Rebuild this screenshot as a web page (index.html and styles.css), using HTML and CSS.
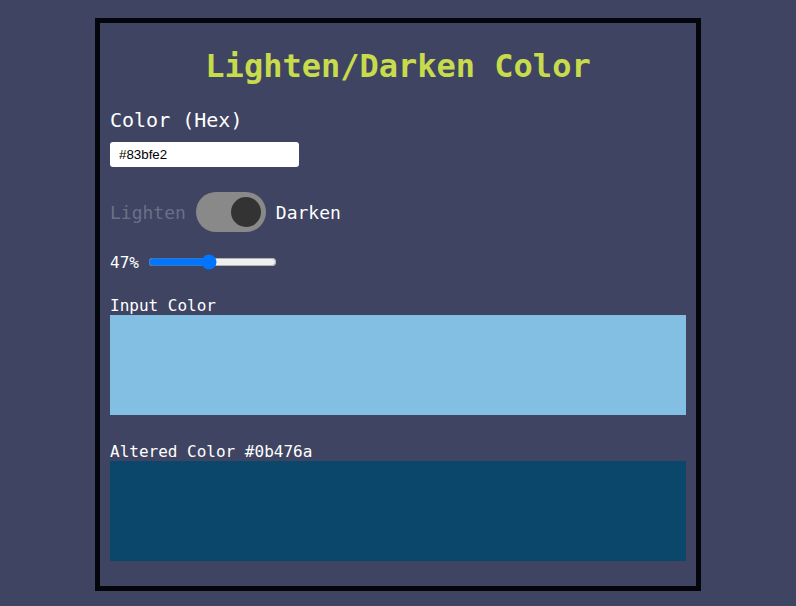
FILE: index.html
```html
<!DOCTYPE html>
<html>
<head>
<meta charset="utf-8">
<link rel="stylesheet" href="styles.css">
</head>
<body>
<div class="box">
  <h1 class="title">Lighten/Darken Color</h1>
  <label class="hex-label" for="hex">Color (Hex)</label>
  <input class="hex-input" id="hex" type="text" value="#83bfe2">
  <div class="toggle-row">
    <span class="mode off">Lighten</span>
    <span class="toggle"><span class="knob"></span></span>
    <span class="mode on">Darken</span>
  </div>
  <div class="slider-row">
    <span class="pct">47%</span>
    <input class="range" type="range" min="0" max="100" value="47">
  </div>
  <div class="swatch-label first">Input Color</div>
  <div class="swatch" style="background:#83bfe2"></div>
  <div class="swatch-label">Altered Color #0b476a</div>
  <div class="swatch" style="background:#0b476a"></div>
</div>
</body>
</html>
```
FILE: styles.css
```css
html, body {
  margin: 0;
  padding: 0;
  background: #3e4462;
}
body {
  font-family: "DejaVu Sans Mono", "Liberation Mono", monospace;
  color: #ffffff;
}
.box {
  box-sizing: border-box;
  width: 606px;
  margin: 18px auto 0;
  border: 5px solid #05060b;
  padding: 0 10px 25px;
  display: flex;
  flex-direction: column;
  align-items: flex-start;
}
.title {
  align-self: stretch;
  margin: 23px 0 0;
  text-align: center;
  font-size: 32px;
  line-height: 40px;
  font-weight: bold;
  color: #c8db4c;
}
.hex-label {
  margin-top: 22px;
  font-size: 20px;
  line-height: 24px;
}
.hex-input {
  box-sizing: border-box;
  margin: 10px 0 0;
  width: 189px;
  height: 25px;
  border: none;
  border-radius: 3px;
  padding: 0 9px;
  font-family: "Liberation Sans", Arial, sans-serif;
  font-size: 13.33px;
  color: #000;
  background: #fff;
  outline: none;
}
.toggle-row {
  margin-top: 25px;
  display: flex;
  align-items: center;
  gap: 10px;
  height: 40px;
}
.mode {
  font-size: 18px;
  line-height: 24px;
  padding-top: 2px;
}
.mode.off { color: #6b7089; }
.mode.on { color: #ffffff; }
.toggle {
  box-sizing: border-box;
  width: 70px;
  height: 40px;
  border-radius: 20px;
  background: #898989;
  display: flex;
  align-items: center;
  justify-content: flex-end;
  padding: 0 5px;
}
.knob {
  width: 30px;
  height: 30px;
  border-radius: 50%;
  background: #333333;
}
.slider-row {
  margin-top: 20px;
  height: 20px;
  display: flex;
  align-items: center;
  gap: 9px;
}
.pct {
  font-size: 16px;
  line-height: 20px;
  padding-top: 2px;
}
.range {
  width: 129px;
  margin: 0;
}
.swatch-label {
  margin-top: 27px;
  font-size: 16px;
  line-height: 19px;
}
.swatch-label.first {
  margin-top: 24px;
}
.swatch {
  align-self: stretch;
  height: 100px;
}
```
